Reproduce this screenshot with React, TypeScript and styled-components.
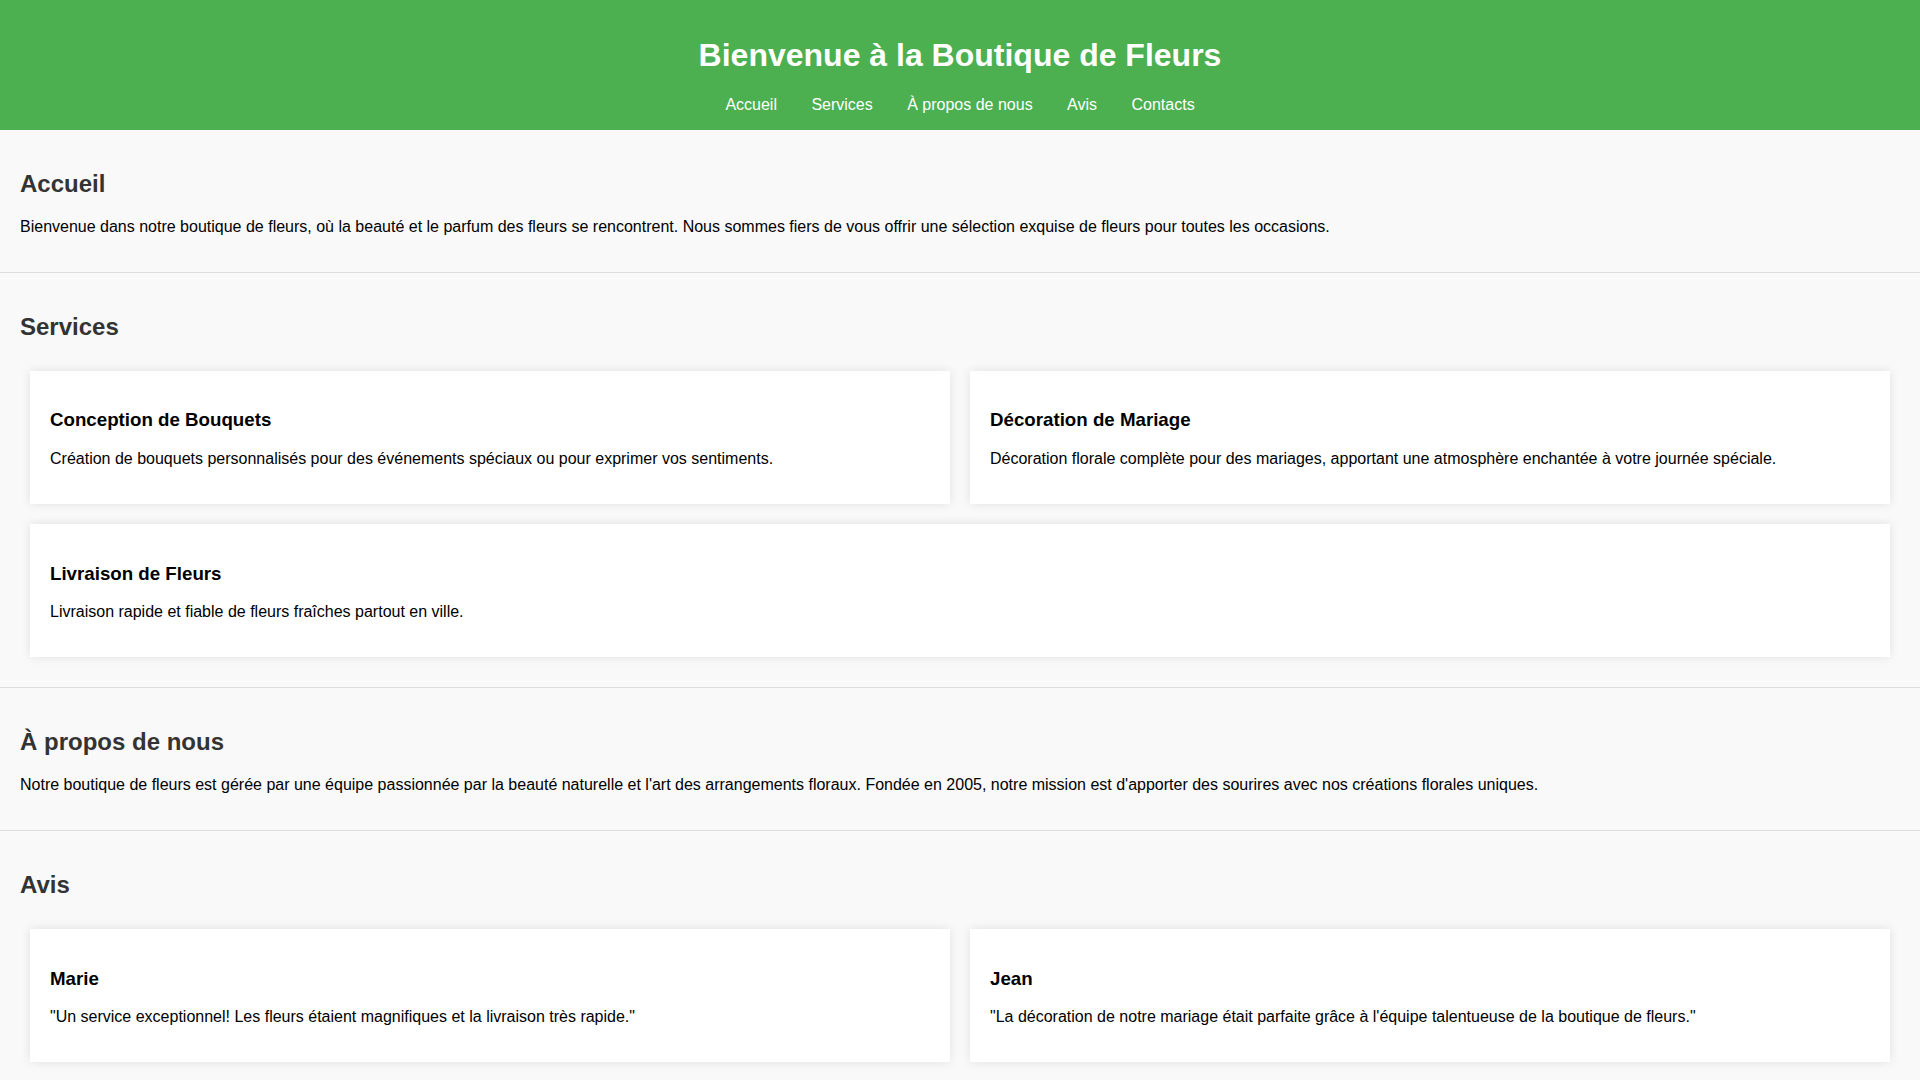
import React from 'react';
import styled, { createGlobalStyle } from 'styled-components';

const GlobalStyle = createGlobalStyle`
  html {
    overflow-y: scroll;
  }

  html::-webkit-scrollbar {
    width: 15px;
    background: #f1f1f1;
  }

  html::-webkit-scrollbar-thumb {
    background: #c1c1c1;
    border: 3px solid #f1f1f1;
    border-top-width: 15px;
    border-bottom-width: 15px;
    background-clip: padding-box;
  }

  body {
    margin: 0;
    padding: 0;
    font-family: "Liberation Sans", Arial, sans-serif;
    background-color: #f9f9f9;
    color: #000;
  }
`;

const Header = styled.header`
  background-color: #4caf50;
  color: #fff;
  padding: 1rem 0;
  text-align: center;

  h1 {
    font-size: 2em;
    margin: 0.67em 0;
  }
`;

const NavList = styled.ul`
  list-style: none;
  margin: 0;
  padding: 0;
`;

const NavItem = styled.li`
  display: inline;
  margin: 0 15px;

  a {
    color: #fff;
    text-decoration: none;
  }
`;

const Section = styled.section`
  padding: 20px;
  border-bottom: 1px solid #ddd;

  h2 {
    color: #333;
    font-size: 1.5em;
    margin: 0.83em 0;
  }

  p {
    margin: 1em 0;
  }
`;

const CardGrid = styled.div`
  display: flex;
  flex-wrap: wrap;
`;

const Card = styled.div`
  box-sizing: border-box;
  flex: 1 1 calc(50% - 20px);
  margin: 10px;
  padding: 20px;
  background-color: #fff;
  box-shadow: 0 0 10px rgba(0, 0, 0, 0.1);

  h3 {
    font-size: 1.17em;
    margin: 1em 0;
  }
`;

const Footer = styled.footer`
  background-color: #4caf50;
  color: #fff;
  text-align: center;
  padding: 1rem 0;
`;

const links = [
  { id: 'accueil', label: 'Accueil' },
  { id: 'services', label: 'Services' },
  { id: 'apropos', label: 'À propos de nous' },
  { id: 'avis', label: 'Avis' },
  { id: 'contacts', label: 'Contacts' },
];

const services = [
  {
    title: 'Conception de Bouquets',
    text: 'Création de bouquets personnalisés pour des événements spéciaux ou pour exprimer vos sentiments.',
  },
  {
    title: 'Décoration de Mariage',
    text: 'Décoration florale complète pour des mariages, apportant une atmosphère enchantée à votre journée spéciale.',
  },
  {
    title: 'Livraison de Fleurs',
    text: 'Livraison rapide et fiable de fleurs fraîches partout en ville.',
  },
];

const reviews = [
  {
    name: 'Marie',
    text: '"Un service exceptionnel! Les fleurs étaient magnifiques et la livraison très rapide."',
  },
  {
    name: 'Jean',
    text: '"La décoration de notre mariage était parfaite grâce à l\'équipe talentueuse de la boutique de fleurs."',
  },
];

const App = () => (
  <>
    <GlobalStyle />
    <Header>
      <h1>Bienvenue à la Boutique de Fleurs</h1>
      <nav>
        <NavList>
          {links.map((l) => (
            <React.Fragment key={l.id}>
              <NavItem>
                <a href={`#${l.id}`}>{l.label}</a>
              </NavItem>{' '}
            </React.Fragment>
          ))}
        </NavList>
      </nav>
    </Header>
    <main>
      <Section id="accueil">
        <h2>Accueil</h2>
        <p>
          Bienvenue dans notre boutique de fleurs, où la beauté et le parfum des fleurs se
          rencontrent. Nous sommes fiers de vous offrir une sélection exquise de fleurs pour
          toutes les occasions.
        </p>
      </Section>
      <Section id="services">
        <h2>Services</h2>
        <CardGrid>
          {services.map((s) => (
            <Card key={s.title}>
              <h3>{s.title}</h3>
              <p>{s.text}</p>
            </Card>
          ))}
        </CardGrid>
      </Section>
      <Section id="apropos">
        <h2>À propos de nous</h2>
        <p>
          Notre boutique de fleurs est gérée par une équipe passionnée par la beauté naturelle et
          l'art des arrangements floraux. Fondée en 2005, notre mission est d'apporter des
          sourires avec nos créations florales uniques.
        </p>
      </Section>
      <Section id="avis">
        <h2>Avis</h2>
        <CardGrid>
          {reviews.map((r) => (
            <Card key={r.name}>
              <h3>{r.name}</h3>
              <p>{r.text}</p>
            </Card>
          ))}
        </CardGrid>
      </Section>
      <Section id="contacts">
        <h2>Contacts</h2>
        <p>Adresse : 12 rue des Roses, 75001 Paris</p>
        <p>Téléphone : 01 23 45 67 89</p>
        <p>Email : contact@boutiquedefleurs.fr</p>
      </Section>
    </main>
    <Footer>
      <p>&copy; 2024 Boutique de Fleurs. Tous droits réservés.</p>
    </Footer>
  </>
);

export default App;
